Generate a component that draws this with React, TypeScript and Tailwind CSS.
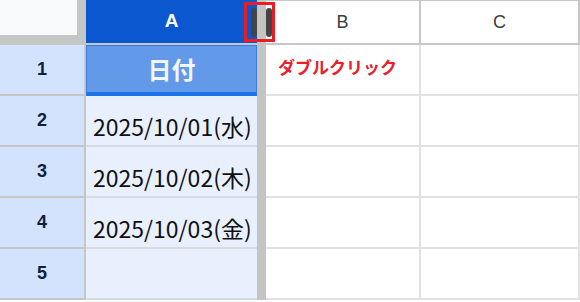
import { Fragment } from 'react';

const rows = [
  { n: 1, a: '日付', b: 'ダブルクリック' },
  { n: 2, a: '2025/10/01(水)', b: '' },
  { n: 3, a: '2025/10/02(木)', b: '' },
  { n: 4, a: '2025/10/03(金)', b: '' },
  { n: 5, a: '', b: '' },
];

const latin = { fontFamily: '"Liberation Sans", Arial, "Noto Sans CJK JP", sans-serif' };
const jp = { fontFamily: '"Noto Sans CJK JP", sans-serif' };

export default function App() {
  return (
    <div className="relative w-[580px] h-[302px] bg-white" style={latin}>
      <div className="grid grid-cols-[86px_171px_9px_155px_159px] grid-rows-[45px_repeat(5,51px)]">
        {/* header row */}
        <div className="bg-[#c4c7c5]">
          <div className="w-[77px] h-[35px] bg-[#f8f9fa]" />
        </div>
        <div className="flex items-center justify-center bg-[#0b57d0] border-b-2 border-[#c4c7c5] text-[19px] font-bold text-white">
          A
        </div>
        <div className="row-span-6 bg-[#c4c4c4]" />
        <div className="flex items-center justify-center bg-white border-t border-b-2 border-r-2 border-[#c7c7c7] text-[18px] text-[#3c3c3c]">
          B
        </div>
        <div className="flex items-center justify-center bg-white border-t border-b-2 border-r-2 border-[#c7c7c7] text-[18px] text-[#3c3c3c]">
          C
        </div>

        {rows.map((r) => (
          <Fragment key={r.n}>
            <div className="flex items-center justify-center bg-[#d3e3fd] border-b-2 border-r-2 border-[#c4c7c5] text-[18px] font-bold text-[#0f1f3f]">
              {r.n}
            </div>
            {r.n === 1 ? (
              <div
                className="flex items-center justify-center bg-[#6399e9] border border-b-[4px] border-[#3a7ce6] border-b-[#1a73e8] text-[24px] font-bold text-[#f2f6fd]"
                style={jp}
              >
                {r.a}
              </div>
            ) : (
              <div
                className="flex items-end pl-[7px] pb-[2px] bg-[#e8f0fe] border-b-2 border-[#d6dbe3] text-[23px] text-[#111]"
                style={jp}
              >
                {r.a}
              </div>
            )}
            <div
              className="flex items-center pl-[12px] pb-[6px] bg-white border-b-2 border-r-2 border-[#e1e1e1] text-[17px] font-bold text-[#e8202a]"
              style={jp}
            >
              {r.b}
            </div>
            <div className="bg-white border-b-2 border-r-2 border-[#e1e1e1]" />
          </Fragment>
        ))}
      </div>

      {/* column resize handle */}
      <div className="absolute left-[251px] top-[8px] w-[6px] h-[29px] rounded-full bg-[#444]" />
      <div className="absolute left-[266px] top-[8px] w-[6px] h-[29px] rounded-full bg-[#444]" />
      <div className="absolute left-[244px] top-[2px] w-[31px] h-[40px] border-[3px] border-[#ea1c24]" />
    </div>
  );
}
